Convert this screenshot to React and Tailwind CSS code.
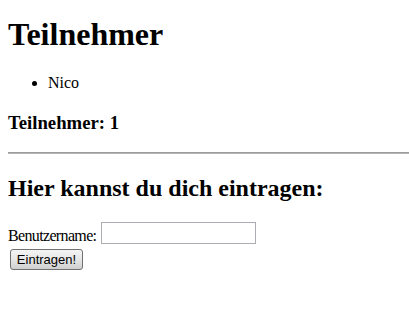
import React, { useState } from 'react';

function App() {
  const [teilnehmer, setTeilnehmer] = useState(['Nico']);
  const [name, setName] = useState('');

  const handleSubmit = (e) => {
    e.preventDefault();
    if (!name.trim()) return;
    setTeilnehmer([...teilnehmer, name.trim()]);
    setName('');
  };

  return (
    <div className="min-h-screen bg-white text-black px-2 font-['Liberation_Serif','Times_New_Roman',serif] flow-root">
      <h1 className="mt-[16px] text-[32px] leading-[36px] font-bold">Teilnehmer</h1>

      <ul className="mt-[22px] pl-[40px] list-disc">
        {teilnehmer.map((t) => (
          <li key={t} className="text-[16px] leading-[18px]">{t}</li>
        ))}
      </ul>

      <h3 className="mt-[20px] text-[18.72px] leading-[22px] font-bold">
        Teilnehmer: {teilnehmer.length}
      </h3>

      <hr className="mt-[18px] -mr-2 border-0 border-t border-b border-t-[#9c9c9c] border-b-[#b4b4b4]" />

      <h2 className="mt-[20px] text-[24px] leading-[28px] font-bold">Hier kannst du dich eintragen:</h2>

      <form onSubmit={handleSubmit}>
        <div className="mt-[20px] flex items-start">
          <label htmlFor="username" className="text-[16px] leading-[18px] pt-[5px] tracking-[-0.65px]">
            Benutzername:
          </label>
          <input
            id="username"
            value={name}
            onChange={(e) => setName(e.target.value)}
            className="ml-[5px] w-[155px] h-[22px] border border-[#abadb3] bg-white px-1 text-[13px] outline-none"
          />
        </div>
        <button
          type="submit"
          className="mt-[4px] ml-[2px] w-[73px] h-[21px] rounded-[3px] border border-[#707070] bg-gradient-to-b from-[#f4f4f4] via-[#e6e6e6] to-[#cfcfcf] text-[13px] leading-[19px] font-['Liberation_Sans',Arial,sans-serif] text-black"
        >
          Eintragen!
        </button>
      </form>
    </div>
  );
}

export default App;
